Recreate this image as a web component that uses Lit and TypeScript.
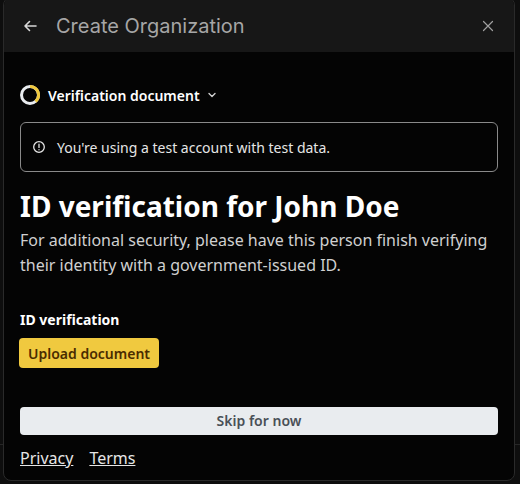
import { LitElement, html, css } from "lit";
import { customElement } from "lit/decorators.js";

@customElement("app-root")
export class AppRoot extends LitElement {
  static styles = css`
    :host { display: block; position: relative; width: 520px; height: 484px; background: linear-gradient(#0e0e0e 444px, #262626 444px, #262626 445px, #0e0e0e 445px); overflow: hidden; font-family: "Noto Sans", sans-serif; }
    .modal { position: relative; box-sizing: border-box; width: 512px; height: 484px; margin: -3px 0 0 3px; background: #040404; border: 1px solid #2a2a2a; border-radius: 8px; overflow: hidden; display: flex; flex-direction: column; }
    .header { flex: none; height: 54px; padding-top: 2px; box-sizing: border-box; background: #171717; display: flex; align-items: center; padding-left: 18px; padding-right: 19px; gap: 18px; }
    .title { flex: 1; font-family: Inter, sans-serif; font-size: 20px; color: #a6a6a6; }
    .body { flex: 1; padding: 0 16px; display: flex; flex-direction: column; align-items: stretch; }
    .step { display: flex; align-items: center; margin-top: 32px; height: 22px; gap: 8px; color: #fff; font-size: 14px; font-weight: 600; }
    .ring { width: 20px; height: 20px; flex: none; }
    .chev { margin-left: -1px; }
    .banner { box-sizing: border-box; height: 50px; margin-top: 16px; border: 1px solid #8a8a8a; border-radius: 6px; display: flex; align-items: center; gap: 11px; padding: 0 11px; color: #e6e6e6; font-size: 14px; }
    h1 { margin: 14px 0 0; font-size: 28px; line-height: 40px; font-weight: 700; color: #fff; }
    .desc { margin: 2px 0 0; font-size: 16px; line-height: 25px; color: #d0d0d0; }
    .label { margin-top: 32px; font-size: 14px; line-height: 20px; font-weight: 700; color: #fff; }
    .upload { align-self: flex-start; box-sizing: border-box; margin: 8px 0 0 -1px; height: 30px; padding: 0 9px; border: 0; border-radius: 4px; background: #f0c93f; color: #4a2c00; font: 600 14px "Noto Sans", sans-serif; }
    .skip { box-sizing: border-box; margin-top: 39px; height: 28px; padding: 0 0 2px; border: 0; border-radius: 4px; background: #e9ecef; color: #495057; font: 600 14px "Noto Sans", sans-serif; }
    .links { display: flex; gap: 16px; margin-top: 11px; font-size: 16px; line-height: 24px; }
    .links a { color: #e6e6e6; text-decoration: underline; }
    svg { display: block; flex: none; }
  `;

  render() {
    return html`
      <div class="modal">
        <div class="header">
          <svg width="16" height="16" viewBox="0 0 16 16" fill="none" stroke="#d8d8d8" stroke-width="1.6" stroke-linecap="round" stroke-linejoin="round"><path d="M14 8H3M7.5 3.5 3 8l4.5 4.5"/></svg>
          <div class="title">Create Organization</div>
          <svg width="14" height="14" viewBox="0 0 14 14" fill="none" stroke="#a0a0a0" stroke-width="1.2" stroke-linecap="round"><path d="M2.5 2.5l9 9M11.500 2.500l-9 9"/></svg>
        </div>
        <div class="body">
          <div class="step">
            <svg class="ring" viewBox="0 0 20 20" fill="none" stroke-width="3"><circle cx="10" cy="10" r="8.500" stroke="#e9ecef"/><path d="M10 1.500A8.500 8.500 0 0 1 15.500 16.500" stroke="#f0c93f"/></svg>
            <span>Verification document</span>
            <svg class="chev" width="10" height="10" viewBox="0 0 10 10" fill="none" stroke="#d0d0d0" stroke-width="1.400" stroke-linecap="round" stroke-linejoin="round"><path d="M2 3.500 5 6.500 8 3.500"/></svg>
          </div>
          <div class="banner">
            <svg width="14" height="14" viewBox="0 0 14 14" fill="none" stroke="#e6e6e6" stroke-width="1.300" stroke-linecap="round"><circle cx="7" cy="7" r="5.300"/><path d="M7 4.200v3.200M7 9.700v.1"/></svg>
            <span>You're using a test account with test data.</span>
          </div>
          <h1>ID verification for John Doe</h1>
          <p class="desc">For additional security, please have this person finish verifying their identity with a government-issued ID.</p>
          <div class="label">ID verification</div>
          <button class="upload">Upload document</button>
          <button class="skip">Skip for now</button>
          <div class="links"><a>Privacy</a><a>Terms</a></div>
        </div>
      </div>
    `;
  }
}
